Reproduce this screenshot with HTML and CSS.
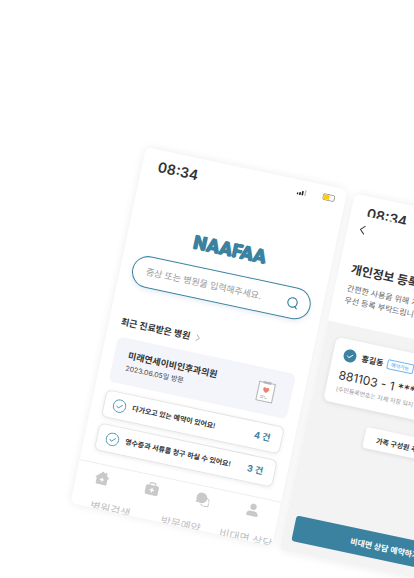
FILE: index.html
```html
<!DOCTYPE html>
<html lang="ko">
<head>
<meta charset="utf-8">
<meta name="viewport" content="width=device-width, initial-scale=1">
<title>NAAFAA</title>
<link rel="stylesheet" href="styles.css">
</head>
<body>
<main class="stage">
  <div class="phones">
    <section class="phone home">
      <header class="status">
        <time class="clock">08:34</time>
        <svg class="signal" viewBox="0 0 10 6"><path d="M0 4h1.600v2H0zM2.500 3h1.600v3H2.500zM5 1.500h1.600V6H5z" fill="#222"/><path d="M7.900 0h1.300v6H7.900z" fill="#bbb"/></svg>
        <svg class="battery" viewBox="0 0 13 7"><rect x=".5" y=".5" width="11.500" height="6" rx="1.600" fill="#fff" stroke="#777" stroke-width=".7"/><path d="M1.300 1.200h5.700v4.600H1.300z" fill="#ffcc0a"/></svg>
      </header>
      <h1 class="logo">NAAFAA</h1>
      <form class="search">
        <input class="search-input" type="text" aria-label="증상 또는 병원 검색" placeholder="증상 또는 병원을 입력해주세요.">
        <button class="search-button" type="button" aria-label="검색">
          <svg viewBox="0 0 12 12" fill="none" stroke="#3b82a0" stroke-width="1.200" stroke-linecap="round"><circle cx="5.600" cy="5.600" r="4.700"/><path d="M8.700 9.100l1.900 2"/></svg>
        </button>
      </form>
      <h2 class="recent"><a href="#recent">최근 진료받은 병원
        <svg viewBox="0 0 5 8" fill="none" stroke="#999" stroke-width=".7"><path d="M.8.8L4 4 .8 7.200"/></svg></a></h2>
      <article class="visit">
        <div>
          <h3 class="visit-name">미래연세이비인후과의원</h3>
          <p class="visit-date">2023.06.05일 방문</p>
        </div>
        <svg class="clipboard" viewBox="0 0 18 21"><rect x="1" y="1.500" width="16" height="18.800" fill="#fff" stroke="#bdbdbd" stroke-width="1.200"/><path d="M5 .3h8v2.400H5z" fill="#b5b5b8"/><path d="M9 11.800C4.600 9 5.700 6.300 7.400 6.300c.9 0 1.400.6 1.600 1 .2-.4.7-1 1.600-1 1.700 0 2.800 2.700-1.600 5.500z" fill="#f27f6e"/><path d="M4.300 15.200h5M4.300 17h3.500m1 0h2.500" stroke="#aaa" stroke-width=".7"/></svg>
      </article>
      <ul class="notices">
        <li><a class="notice" href="#bookings">
          <svg viewBox="0 0 14 14" fill="none" stroke="#5097b2"><circle cx="7" cy="7" r="6.300" stroke-width=".9"/><path d="M4.200 7.200l2 1.800 3.900-3.600" stroke-width=".9"/></svg>
          <span class="notice-text">다가오고 있는 예약이 있어요!</span><strong>4 건</strong></a></li>
        <li><a class="notice" href="#claims">
          <svg viewBox="0 0 14 14" fill="none" stroke="#5097b2"><circle cx="7" cy="7" r="6.300" stroke-width=".9"/><path d="M4.200 7.200l2 1.800 3.900-3.600" stroke-width=".9"/></svg>
          <span class="notice-text">영수증과 서류를 청구 하실 수 있어요!</span><strong>3 건</strong></a></li>
      </ul>
      <nav class="tabs">
        <div class="tab-icons">
          <svg viewBox="0 0 14 14"><path d="M7 .3l2.300 2V1.200h2v2.900l2.300 2c.6.500.2 1.100-.4 1.100h-.7v5.200c0 .7-.4 1.100-1.100 1.100H2.600c-.7 0-1.100-.4-1.100-1.100V7.200H.8c-.6 0-1-.6-.4-1.100z" fill="#c9c9c9"/><path d="M7 6.700v4M5 8.700h4" stroke="#fff" stroke-width="1.200"/></svg>
          <svg viewBox="0 0 14 14"><rect x=".3" y="3.400" width="13.400" height="10" rx="2" fill="#c9c9c9"/><path d="M4.200 3.500V2.300c0-.8.4-1.200 1.200-1.200h3.200c.8 0 1.200.4 1.200 1.200v1.200" fill="none" stroke="#c9c9c9" stroke-width="1.300"/><path d="M7 6.200v4.400M4.800 8.400h4.400" stroke="#fff" stroke-width="1.200"/></svg>
          <svg viewBox="0 0 14 14"><path d="M9 4.700a4.500 4.500 0 0 1 4.300 6.400l.2 2.200-2.300-.3a4.500 4.500 0 0 1-5.600-1.300" fill="#fff" stroke="#c9c9c9" stroke-width="1"/><path d="M5.600.3a5.300 5.300 0 1 1-2.400 10L.3 10.800l.5-2.700A5.300 5.300 0 0 1 5.600.3z" fill="#c9c9c9"/></svg>
          <svg viewBox="0 0 14 14"><circle cx="7" cy="3.600" r="3.200" fill="#c9c9c9"/><path d="M1.200 11.800c0-2.500 1.700-3.800 3.800-3.800h4c2.100 0 3.800 1.300 3.800 3.800 0 .9-.4 1.200-1.100 1.200H2.300c-.7 0-1.100-.3-1.100-1.200z" fill="#c9c9c9"/></svg>
        </div>
        <div class="tab-labels"><a href="#find">병원검색</a><a href="#visit">방문예약</a><a href="#remote">비대면 상담</a></div>
      </nav>
    </section>

    <section class="phone profile">
      <header class="status short"><time class="clock">08:34</time></header>
      <div class="intro">
        <button class="back" type="button" aria-label="뒤로"><svg viewBox="0 0 6 10" fill="none" stroke="#333" stroke-width="1"><path d="M5.200.8L1 5l4.200 4.200"/></svg></button>
        <h2 class="title">개인정보 등록</h2>
        <p class="lead">간편한 사용을 위해 개인정보를<br>우선 등록 부탁드립니다.</p>
      </div>
      <div class="content">
        <article class="person">
          <div class="person-head">
            <svg viewBox="0 0 14 14"><circle cx="7" cy="7" r="6.500" fill="#3b82a0"/><path d="M4.200 7.200l2 1.700 3.700-3.400" fill="none" stroke="#fff" stroke-width=".9"/></svg>
            <h3>홍길동</h3><span class="badge">예약가능</span>
          </div>
          <p class="number">881103 - 1 ******</p>
          <p class="hint">(주민등록번호는 자체 저장 되지 않습니다)</p>
        </article>
        <button class="add" type="button">가족 구성원 추가하기</button>
        <button class="book" type="button">비대면 상담 예약하기</button>
      </div>
    </section>
  </div>
</main>
</body>
</html>
```
FILE: styles.css
```css
* { box-sizing: border-box; }

body {
  margin: 0;
  background: #fff;
  color: #333;
  font-family: Inter, "Noto Sans CJK KR", sans-serif;
  overflow: hidden;
}

h1, h2, h3, p, ul { margin: 0; padding: 0; }
ul { list-style: none; }
a { color: inherit; text-decoration: none; }
button, input { font: inherit; color: inherit; border: 0; padding: 0; background: none; }
svg { display: block; flex: none; }

.stage {
  min-height: 100vh;
  padding: 147px 0 0 146px;
  overflow: hidden;
}

.phones {
  display: flex;
  gap: 8px;
  width: max-content;
  transform: rotate(12deg);
  transform-origin: 0 0;
}

.phone {
  display: flex;
  flex-direction: column;
  width: 206px;
  height: 364px;
  border-radius: 6px;
  background: #fff;
  box-shadow: 0 0 10px rgba(0, 0, 0, .08);
  overflow: hidden;
}
.phone > * { flex-shrink: 0; }

.profile { margin: 2px 0 -2px; }

/* Status bar */
.status {
  display: flex;
  align-items: flex-start;
  height: 32px;
  padding: 8px 10px 0 16px;
}
.status.short { height: 20px; overflow: hidden; }
.clock { flex: 1; font-size: 14px; line-height: 18px; font-weight: 600; }
.signal { width: 10px; height: 6px; margin: 1px 16px 0 0; }
.battery { width: 13px; height: 7px; }

/* Home */
.logo {
  margin-top: 40px;
  color: #3b82a0;
  font-family: Roboto, sans-serif;
  font-size: 19px;
  line-height: 22px;
  font-weight: 900;
  text-align: center;
  text-shadow: 1px 0 #3b82a0, 0 1px #3b82a0;
}

.search {
  display: flex;
  align-items: center;
  height: 32px;
  margin: 12px 12px 0;
  padding: 0 11px 0 13px;
  border: 1px solid #3b82a0;
  border-radius: 16px;
  box-shadow: 0 2px 5px rgba(60, 90, 150, .12);
}
.search-input { flex: 1; min-width: 0; font-size: 9px; line-height: 14px; outline: 0; }
.search-input::placeholder { color: #999; opacity: 1; }
.search-button svg { width: 12px; height: 12px; }

.recent { margin: 31px 12px 0; font-size: 9px; line-height: 14px; }
.recent a { display: flex; align-items: center; gap: 5px; }
.recent svg { width: 5px; height: 8px; }

.visit {
  display: flex;
  align-items: center;
  justify-content: space-between;
  height: 46px;
  margin: 8px 12px 0;
  padding: 0 17px 0 14px;
  border-radius: 6px;
  background: #f4f5fa;
}
.visit-name { font-size: 9px; line-height: 14px; font-weight: 600; }
.visit-date { font-size: 7px; line-height: 12px; color: #444; }
.clipboard { width: 18px; height: 21px; }

.notices { display: grid; gap: 6px; margin: 8px 12px 0; }
.notice {
  display: flex;
  align-items: center;
  gap: 6px;
  height: 28px;
  padding: 0 11px 0 8px;
  border: 1px solid #e4e4e4;
  border-radius: 6px;
  box-shadow: 0 1px 4px rgba(0, 0, 0, .08);
}
.notice svg { width: 14px; height: 14px; }
.notice-text { flex: 1; font-size: 7px; line-height: 12px; font-weight: 600; white-space: nowrap; }
.notice strong { color: #3b82a0; font-size: 9px; line-height: 14px; }

.tabs { margin-top: 12px; border-top: 1px solid #eee; color: #c0c0c0; }
.tab-icons { display: grid; grid-template-columns: repeat(4, 1fr); justify-items: center; padding-top: 6px; }
.tab-icons svg { width: 14px; height: 14px; }
.tab-labels {
  display: grid;
  grid-template-columns: 72px 60px 60px;
  padding: 15px 0 0 20px;
  font-size: 11px;
  line-height: 14px;
  white-space: nowrap;
}

/* Profile */
.intro { height: 110px; padding: 9px 12px 0; }
.back { display: block; }
.back svg { width: 6px; height: 10px; }
.title { margin-top: 27px; font-size: 12px; line-height: 18px; }
.lead { margin-top: 4px; color: #666; font-size: 8px; line-height: 12px; }

.content {
  flex: 1;
  display: flex;
  flex-direction: column;
  padding: 14px 10px 11px;
  background: #f3f3f3;
}
.person {
  height: 65px;
  margin: 0 2px;
  padding: 9px 10px 0;
  border-radius: 6px;
  background: #fff;
  box-shadow: 0 1px 5px rgba(0, 0, 0, .1);
}
.person-head { display: flex; align-items: center; height: 14px; }
.person-head svg { width: 14px; height: 14px; margin-right: 5px; }
.person-head h3 { font-size: 8px; line-height: 14px; }
.badge {
  margin-left: 4px;
  padding: 0 3px;
  border: 1px solid #74b6f2;
  border-radius: 2px;
  color: #4a9fee;
  font-size: 5px;
  line-height: 8px;
}
.number { margin-top: 6px; font-size: 12px; line-height: 16px; }
.hint { margin-top: 1px; color: #999; font-size: 6px; line-height: 10px; }
.add {
  align-self: center;
  height: 21px;
  margin-top: 17px;
  padding: 0 12px;
  border-radius: 3px;
  background: #fff;
  box-shadow: 0 1px 4px rgba(0, 0, 0, .1);
  font-size: 7px;
  font-weight: 600;
}
.book {
  height: 26px;
  margin-top: auto;
  border-radius: 3px;
  background: #3b82a0;
  color: #fff;
  font-size: 8px;
  font-weight: 600;
}
```
